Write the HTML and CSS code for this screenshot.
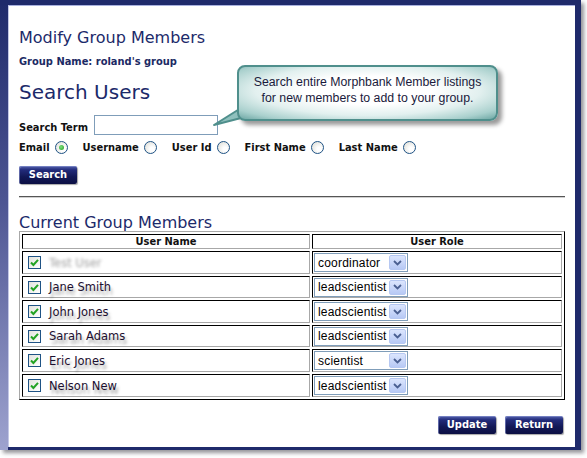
FILE: index.html
```html
<!DOCTYPE html>
<html>
<head>
<meta charset="utf-8">
<link rel="stylesheet" href="styles.css">
</head>
<body>
<div class="frame">
  <div class="panel">
    <h1 class="title">Modify Group Members</h1>
    <div class="group-name">Group Name: roland's group</div>
    <h2 class="search-title">Search Users</h2>
    <div class="term-row">
      <label class="term-label">Search Term</label>
      <input class="term-input" type="text">
    </div>
    <div class="radio-row">
      <span class="radio-label">Email</span><span class="radio checked"></span>
      <span class="radio-label">Username</span><span class="radio"></span>
      <span class="radio-label">User Id</span><span class="radio"></span>
      <span class="radio-label">First Name</span><span class="radio"></span>
      <span class="radio-label">Last Name</span><span class="radio"></span>
    </div>
    <button class="btn btn-search">Search</button>
    <div class="rule"></div>
    <h2 class="members-title">Current Group Members</h2>
    <table class="members">
      <colgroup><col class="col-name"><col class="col-role"></colgroup>
      <tr><th>User Name</th><th>User Role</th></tr>
      <tr><td><div class="name-cell"><span class="cb"><svg width="13" height="13" viewBox="0 0 13 13"><path d="M3 6.5 L5.4 9 L10 3.8" fill="none" stroke="#23a323" stroke-width="2"/></svg></span><span class="name blurred">Test User</span></div></td>
          <td><div class="select"><span class="sel-text">coordinator</span><span class="sel-btn"><svg width="9" height="6" viewBox="0 0 9 6"><path d="M1 1 L4.5 4.5 L8 1" fill="none" stroke="#4a5f91" stroke-width="1.8"/></svg></span></div></td></tr>
      <tr><td><div class="name-cell"><span class="cb"><svg width="13" height="13" viewBox="0 0 13 13"><path d="M3 6.5 L5.4 9 L10 3.8" fill="none" stroke="#23a323" stroke-width="2"/></svg></span><span class="name">Jane Smith</span></div></td>
          <td><div class="select"><span class="sel-text">leadscientist</span><span class="sel-btn"><svg width="9" height="6" viewBox="0 0 9 6"><path d="M1 1 L4.5 4.5 L8 1" fill="none" stroke="#4a5f91" stroke-width="1.8"/></svg></span></div></td></tr>
      <tr><td><div class="name-cell"><span class="cb"><svg width="13" height="13" viewBox="0 0 13 13"><path d="M3 6.5 L5.4 9 L10 3.8" fill="none" stroke="#23a323" stroke-width="2"/></svg></span><span class="name">John Jones</span></div></td>
          <td><div class="select"><span class="sel-text">leadscientist</span><span class="sel-btn"><svg width="9" height="6" viewBox="0 0 9 6"><path d="M1 1 L4.5 4.5 L8 1" fill="none" stroke="#4a5f91" stroke-width="1.8"/></svg></span></div></td></tr>
      <tr><td><div class="name-cell"><span class="cb"><svg width="13" height="13" viewBox="0 0 13 13"><path d="M3 6.5 L5.4 9 L10 3.8" fill="none" stroke="#23a323" stroke-width="2"/></svg></span><span class="name">Sarah Adams</span></div></td>
          <td><div class="select"><span class="sel-text">leadscientist</span><span class="sel-btn"><svg width="9" height="6" viewBox="0 0 9 6"><path d="M1 1 L4.5 4.5 L8 1" fill="none" stroke="#4a5f91" stroke-width="1.8"/></svg></span></div></td></tr>
      <tr><td><div class="name-cell"><span class="cb"><svg width="13" height="13" viewBox="0 0 13 13"><path d="M3 6.5 L5.4 9 L10 3.8" fill="none" stroke="#23a323" stroke-width="2"/></svg></span><span class="name">Eric Jones</span></div></td>
          <td><div class="select"><span class="sel-text">scientist</span><span class="sel-btn"><svg width="9" height="6" viewBox="0 0 9 6"><path d="M1 1 L4.5 4.5 L8 1" fill="none" stroke="#4a5f91" stroke-width="1.8"/></svg></span></div></td></tr>
      <tr><td><div class="name-cell"><span class="cb"><svg width="13" height="13" viewBox="0 0 13 13"><path d="M3 6.5 L5.4 9 L10 3.8" fill="none" stroke="#23a323" stroke-width="2"/></svg></span><span class="name">Nelson New</span></div></td>
          <td><div class="select"><span class="sel-text">leadscientist</span><span class="sel-btn"><svg width="9" height="6" viewBox="0 0 9 6"><path d="M1 1 L4.5 4.5 L8 1" fill="none" stroke="#4a5f91" stroke-width="1.8"/></svg></span></div></td></tr>
    </table>
    <div class="actions">
      <button class="btn">Update</button>
      <button class="btn">Return</button>
    </div>
    <div class="callout">
      <svg class="tail" width="30" height="26" viewBox="0 0 30 26">
        <path d="M29 7 L2 24 L29 17" fill="#8fc0bd" stroke="#4f8f8c" stroke-width="2" stroke-linejoin="round"/>
      </svg>
      <div class="callout-body">
        <div class="callout-text">Search entire Morphbank Member listings<br>for new members to add to your group.</div>
      </div>
    </div>
  </div>
</div>
</body>
</html>
```

FILE: styles.css
```css
html, body {
  margin: 0;
  padding: 0;
  background: #ffffff;
}
body {
  width: 587px;
  height: 458px;
  overflow: hidden;
  font-family: "DejaVu Sans", Verdana, sans-serif;
}
.frame {
  box-sizing: border-box;
  width: 581px;
  height: 450px;
  padding: 5px 6px 3px 8px;
  background:
    linear-gradient(#1f2a6b, #1f2a6b) right top / 6px 100% no-repeat,
    linear-gradient(#1f2a6b, #1f2a6b) left top / 100% 5px no-repeat,
    linear-gradient(#1f2a6b, #1f2a6b) 8px bottom / 100% 3px no-repeat,
    linear-gradient(to bottom, #1f2a6b 0%, #4d5593 45%, #9ea3cf 100%);
  box-shadow: 3px 3px 4px rgba(60, 60, 70, 0.55);
}
.panel {
  position: relative;
  box-sizing: border-box;
  height: 100%;
  background: #ffffff;
  border-top: 1px solid #a9b1de;
  border-left: 1px solid #c3c7e6;
  padding: 22px 9px 0 10px;
}
.title {
  margin: 0;
  font-size: 16px;
  line-height: 20px;
  font-weight: normal;
  color: #1c2a6a;
}
.group-name {
  margin-top: 7px;
  font-family: "DejaVu Sans Condensed", "DejaVu Sans", sans-serif;
  font-size: 11px;
  line-height: 14px;
  font-weight: bold;
  color: #1c2a64;
  white-space: nowrap;
}
.search-title {
  margin: 10px 0 0;
  font-size: 20px;
  line-height: 26px;
  font-weight: normal;
  color: #1c2a6a;
}
.term-row {
  margin-top: 10px;
  display: flex;
  align-items: flex-end;
  height: 20px;
}
.term-label {
  width: 75px;
  font-family: "DejaVu Sans Condensed", "DejaVu Sans", sans-serif;
  font-size: 11px;
  line-height: 14px;
  font-weight: bold;
  color: #111;
  white-space: nowrap;
}
.term-input {
  box-sizing: border-box;
  width: 124px;
  height: 20px;
  margin: 0;
  border: 1px solid #7f9db9;
  background: #fff;
  padding: 0;
}
.radio-row {
  margin-top: 6px;
  display: flex;
  align-items: center;
  height: 14px;
  font-family: "DejaVu Sans Condensed", "DejaVu Sans", sans-serif;
  font-size: 11px;
  line-height: 14px;
  font-weight: bold;
  color: #111;
  white-space: nowrap;
}
.radio-label {
  margin-right: 5px;
}
.radio {
  box-sizing: border-box;
  width: 13px;
  height: 13px;
  border-radius: 50%;
  border: 1px solid #1f5385;
  background: radial-gradient(circle at 65% 65%, #ffffff 20%, #e3e3dd 80%);
  margin-right: 15px;
  margin-top: -2px;
  position: relative;
}
.radio.wide-gap {
  margin-right: 12px;
}
.radio.checked::after {
  content: "";
  position: absolute;
  left: 3px;
  top: 3px;
  width: 5px;
  height: 5px;
  border-radius: 50%;
  background: radial-gradient(circle at 40% 40%, #7ee07e, #1f9b1f);
}
.btn {
  display: inline-block;
  box-sizing: border-box;
  width: 58px;
  height: 18px;
  margin: 0;
  padding: 0;
  border: none;
  border-radius: 2px;
  background: linear-gradient(to bottom, #5563ae 0%, #222b7a 22%, #121856 60%, #0b0f44 100%);
  box-shadow: 1px 1px 1px rgba(0, 0, 0, 0.35), inset 1px 1px 0 rgba(140, 150, 210, 0.6);
  color: #ffffff;
  font-family: "DejaVu Sans Condensed", "DejaVu Sans", sans-serif;
  font-size: 11px;
  font-weight: bold;
  line-height: 18px;
  text-align: center;
}
.btn-search {
  display: block;
  margin-top: 11px;
}
.rule {
  margin-top: 12px;
  border-top: 1px solid #555;
  border-bottom: 1px solid #d0d0d0;
  width: 546px;
}
.members-title {
  margin: 17px 0 0;
  font-size: 16px;
  line-height: 16px;
  font-weight: normal;
  color: #1c2a6a;
}
.members {
  box-sizing: border-box;
  width: 546px;
  border-collapse: separate;
  border-spacing: 2px;
  border-top: 1px solid #a8a8a8;
  border-left: 1px solid #a8a8a8;
  border-right: 1px solid #000;
  border-bottom: 1px solid #000;
  table-layout: fixed;
}
.col-name { width: 288px; }
.col-role { width: 250px; }
.members th, .members td {
  box-sizing: border-box;
  border-top: 1px solid #000;
  border-left: 1px solid #000;
  border-right: 1px solid #a8a8a8;
  border-bottom: 1px solid #a8a8a8;
  padding: 0;
}
.members th {
  height: 15px;
  font-family: "DejaVu Sans Condensed", "DejaVu Sans", sans-serif;
  font-size: 11px;
  line-height: 12px;
  font-weight: bold;
  color: #111;
  text-align: center;
}
.members td {
  height: 23px;
  vertical-align: middle;
}
.members tr:nth-child(odd) td {
  height: 22px;
}
.members tr:last-child td {
  height: 23px;
}
.name-cell {
  display: flex;
  align-items: center;
  padding-left: 5px;
}
.cb {
  box-sizing: border-box;
  width: 13px;
  height: 13px;
  border: 1px solid #1f5385;
  background: linear-gradient(135deg, #e2e2dc, #ffffff);
  display: flex;
}
.cb svg {
  margin: -1px;
}
.name {
  margin-left: 8px;
  font-size: 11.5px;
  line-height: 14px;
  color: #1d1030;
  text-shadow: 2px 4px 3px rgba(0, 0, 0, 0.35);
}
.name.blurred {
  color: #a0a0a0;
  filter: blur(1.4px);
  text-shadow: none;
}
.select {
  box-sizing: border-box;
  width: 94px;
  height: 19px;
  margin-left: 1px;
  border: 1px solid #7f9db9;
  display: flex;
  align-items: center;
  justify-content: space-between;
  background: #fff;
}
.sel-text {
  padding-left: 3px;
  font-family: "Liberation Sans", Arial, sans-serif;
  font-size: 12px;
  letter-spacing: 0.2px;
  color: #000;
}
.sel-btn {
  box-sizing: border-box;
  width: 17px;
  height: 15px;
  margin-right: 1px;
  border: 1px solid #b6c8f2;
  border-radius: 2px;
  background: linear-gradient(to bottom, #dbe5fd, #b7c9f5);
  display: flex;
  align-items: center;
  justify-content: center;
}
.actions {
  margin-top: 16px;
  display: flex;
  justify-content: flex-end;
  gap: 9px;
  padding-right: 3px;
}
.callout {
  position: absolute;
  left: 228px;
  top: 59px;
  width: 261px;
  height: 56px;
}
.tail {
  position: absolute;
  left: -25px;
  top: 36px;
  overflow: visible;
}
.callout-body {
  position: relative;
  box-sizing: border-box;
  width: 100%;
  height: 100%;
  border: 2px solid #4f8f8c;
  border-radius: 8px;
  background: radial-gradient(ellipse at 50% 45%, #ffffff 35%, #e2f0ef 62%, #a9d0cd 85%, #6da7a4 100%);
  box-shadow: 4px 4px 4px rgba(0, 0, 0, 0.4);
  padding-top: 7px;
}
.callout-text {
  font-family: "Liberation Sans", Arial, sans-serif;
  font-size: 12.3px;
  line-height: 16px;
  color: #1a1a3c;
  text-align: center;
}
```
